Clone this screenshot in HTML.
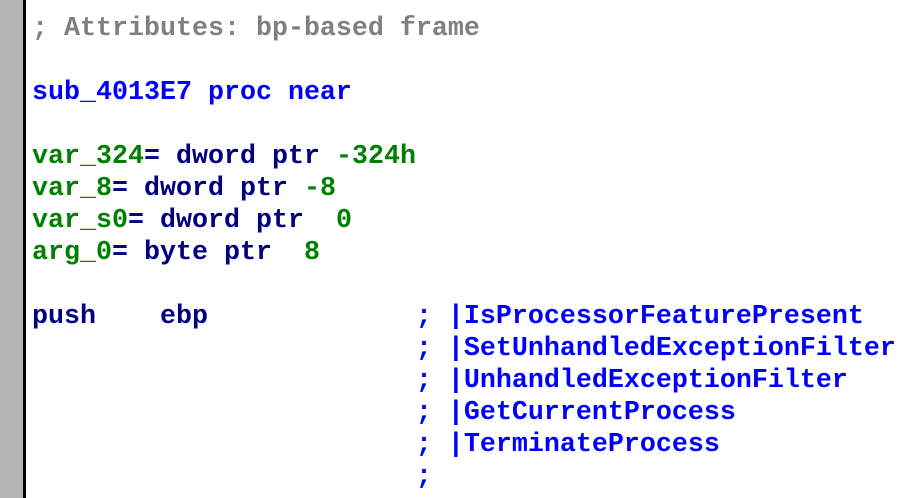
<!DOCTYPE html>
<html><head><style>
html,body{margin:0;padding:0;background:#fff;width:898px;height:498px;overflow:hidden}
.bar{position:absolute;left:0;top:0;width:23px;height:498px;background:#b4b4b4}
.ln{position:absolute;left:23px;top:0;width:3px;height:498px;background:#000}
pre{position:absolute;left:32px;top:13px;margin:0;font-family:"Liberation Mono",monospace;font-weight:bold;font-size:26.67px;line-height:32px;color:#000080;letter-spacing:0}
.c{color:#808080}.b{color:#0000ff}.g{color:#008000}
</style></head><body>
<div class="bar"></div><div class="ln"></div>
<pre><span class="c">; Attributes: bp-based frame</span>

<span class="b">sub_4013E7 proc near</span>

<span class="g">var_324</span>= dword ptr <span class="g">-324h</span>
<span class="g">var_8</span>= dword ptr <span class="g">-8</span>
<span class="g">var_s0</span>= dword ptr  <span class="g">0</span>
<span class="g">arg_0</span>= byte ptr  <span class="g">8</span>

push    ebp             <span class="b">; |IsProcessorFeaturePresent</span>
                        <span class="b">; |SetUnhandledExceptionFilter</span>
                        <span class="b">; |UnhandledExceptionFilter</span>
                        <span class="b">; |GetCurrentProcess</span>
                        <span class="b">; |TerminateProcess</span>
                        <span class="b">;</span>
</pre>
</body></html>
